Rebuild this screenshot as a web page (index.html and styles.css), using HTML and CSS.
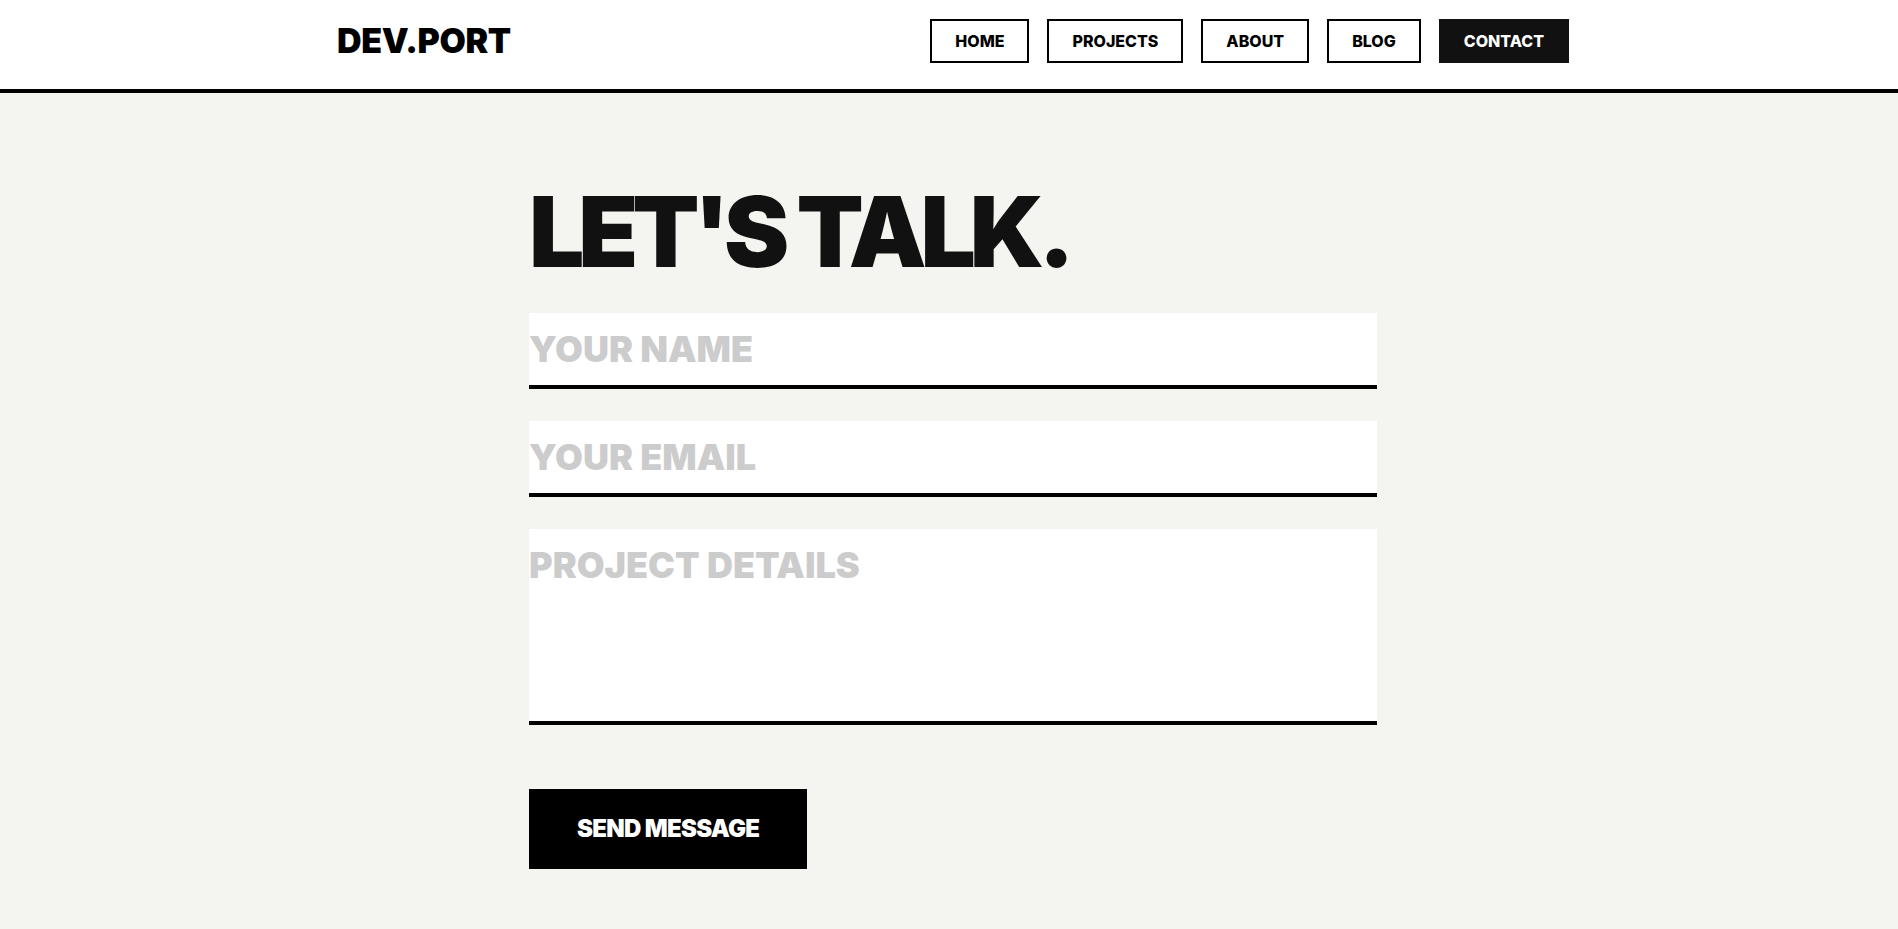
FILE: index.html
```html
<!DOCTYPE html>
<html lang="en">
<head>
<meta charset="utf-8">
<title>DEV.PORT — Contact</title>
<link rel="stylesheet" href="styles.css">
</head>
<body>
<header class="site-header">
  <div class="header-inner">
    <a class="logo" href="#">DEV.PORT</a>
    <nav class="nav">
      <a class="nav-link" href="#">HOME</a>
      <a class="nav-link" href="#">PROJECTS</a>
      <a class="nav-link" href="#">ABOUT</a>
      <a class="nav-link" href="#">BLOG</a>
      <a class="nav-link active" href="#">CONTACT</a>
    </nav>
  </div>
</header>
<main class="main">
  <section class="contact">
    <h1 class="title">LET'S TALK.</h1>
    <form class="form">
      <input class="field" type="text" placeholder="YOUR NAME">
      <input class="field" type="email" placeholder="YOUR EMAIL">
      <textarea class="field area" placeholder="PROJECT DETAILS"></textarea>
      <button class="send" type="button">SEND MESSAGE</button>
    </form>
  </section>
</main>
</body>
</html>
```

FILE: styles.css
```css
* { box-sizing: border-box; }
html, body { margin: 0; padding: 0; }
body {
  background: #f4f4f0;
  color: #111;
  font-family: Inter, "Noto Sans", sans-serif;
  min-height: 929px;
}
.site-header {
  background: #fff;
  border-bottom: 4px solid #000;
  padding: 19px 0 26px 8px;
}
.header-inner {
  width: 1232px;
  margin: 0 auto;
  display: flex;
  align-items: center;
  justify-content: space-between;
}
.logo {
  font-size: 34px;
  font-weight: 900;
  letter-spacing: -0.01em;
  color: #000;
  text-decoration: none;
  line-height: 44px;
}
.nav {
  display: flex;
  gap: 18px;
}
.nav-link {
  display: block;
  border: 2px solid #000;
  padding: 12px 23px;
  font-size: 16px;
  line-height: 16px;
  font-weight: 800;
  color: #000;
  text-decoration: none;
}
.nav-link.active {
  background: #111;
  border-color: #111;
  color: #fff;
}
.main {
  padding: 90px 0 60px 8px;
}
.contact {
  width: 848px;
  margin: 0 auto;
}
.title {
  margin: 0 0 32px;
  font-size: 98px;
  line-height: 1;
  font-weight: 900;
  letter-spacing: -0.062em;
  color: #111;
}
.form {
  display: flex;
  flex-direction: column;
  align-items: flex-start;
  gap: 32px;
}
.field {
  width: 100%;
  display: block;
  border: 0;
  border-bottom: 4px solid #000;
  border-radius: 0;
  background: #fff;
  padding: 16px 0;
  font-family: Inter, "Noto Sans", sans-serif;
  font-size: 36px;
  line-height: 40px;
  font-weight: 900;
  color: #111;
  outline: none;
}
.field::placeholder {
  color: #ccc;
  opacity: 1;
}
.area {
  height: 196px;
  resize: none;
}
.send {
  margin-top: 32px;
  background: #000;
  color: #fff;
  border: 0;
  padding: 24px 48px;
  font-family: Inter, "Noto Sans", sans-serif;
  font-size: 24px;
  line-height: 32px;
  font-weight: 900;
  letter-spacing: -0.03em;
  cursor: pointer;
}
```
